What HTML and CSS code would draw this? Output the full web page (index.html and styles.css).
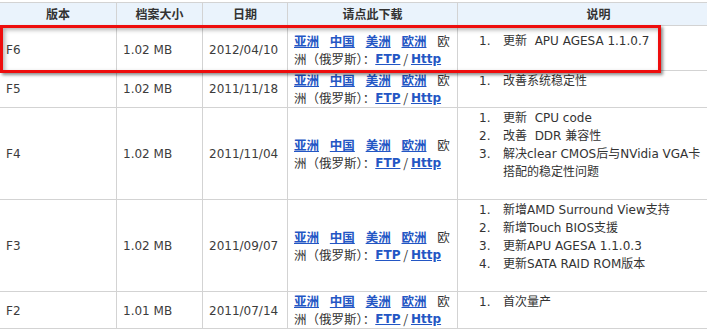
FILE: index.html
```html
<!DOCTYPE html>
<html lang="zh-CN">
<head>
<meta charset="utf-8">
<title>BIOS 下载</title>
<link rel="stylesheet" href="styles.css">
</head>
<body>
<div class="wrap">
<table class="bios">
  <colgroup>
    <col class="c-ver"><col class="c-size"><col class="c-date"><col class="c-dl"><col class="c-desc">
  </colgroup>
  <thead>
    <tr class="head">
      <th>版本</th><th>档案大小</th><th>日期</th><th>请点此下载</th><th>说明</th>
    </tr>
  </thead>
  <tbody>
    <tr class="r6">
      <td>F6</td><td>1.02 MB</td><td>2012/04/10</td>
      <td class="dl"><a href="#">亚洲</a> <a href="#">中国</a> <a href="#">美洲</a> <a href="#">欧洲</a> 欧洲（俄罗斯）：<a href="#" class="lat">FTP</a> / <a href="#" class="lat">Http</a></td>
      <td class="desc first"><ol><li>更新&nbsp; APU AGESA 1.1.0.7</li></ol></td>
    </tr>
    <tr class="r5">
      <td>F5</td><td>1.02 MB</td><td>2011/11/18</td>
      <td class="dl"><a href="#">亚洲</a> <a href="#">中国</a> <a href="#">美洲</a> <a href="#">欧洲</a> 欧洲（俄罗斯）：<a href="#" class="lat">FTP</a> / <a href="#" class="lat">Http</a></td>
      <td class="desc"><ol><li>改善系统稳定性</li></ol></td>
    </tr>
    <tr class="r4">
      <td>F4</td><td>1.02 MB</td><td>2011/11/04</td>
      <td class="dl"><a href="#">亚洲</a> <a href="#">中国</a> <a href="#">美洲</a> <a href="#">欧洲</a> 欧洲（俄罗斯）：<a href="#" class="lat">FTP</a> / <a href="#" class="lat">Http</a></td>
      <td class="desc"><ol><li>更新&nbsp; CPU code</li><li>改善&nbsp; DDR 兼容性</li><li>解决clear CMOS后与NVidia VGA卡搭配的稳定性问题</li></ol></td>
    </tr>
    <tr class="r3">
      <td>F3</td><td>1.02 MB</td><td>2011/09/07</td>
      <td class="dl"><a href="#">亚洲</a> <a href="#">中国</a> <a href="#">美洲</a> <a href="#">欧洲</a> 欧洲（俄罗斯）：<a href="#" class="lat">FTP</a> / <a href="#" class="lat">Http</a></td>
      <td class="desc"><ol><li>新增AMD Surround View支持</li><li>新增Touch BIOS支援</li><li>更新APU AGESA 1.1.0.3</li><li>更新SATA RAID ROM版本</li></ol></td>
    </tr>
    <tr class="r2">
      <td>F2</td><td>1.01 MB</td><td>2011/07/14</td>
      <td class="dl"><a href="#">亚洲</a> <a href="#">中国</a> <a href="#">美洲</a> <a href="#">欧洲</a> 欧洲（俄罗斯）：<a href="#" class="lat">FTP</a> / <a href="#" class="lat">Http</a></td>
      <td class="desc"><ol><li>首次量产</li></ol></td>
    </tr>
  </tbody>
</table>
<div class="highlight"></div>
</div>
</body>
</html>
```

FILE: styles.css
```css
html, body {
  margin: 0;
  padding: 0;
  background: #fff;
  overflow: hidden;
}
.wrap {
  position: relative;
  padding-top: 2px;
  width: 707px;
  height: 329px;
  overflow: hidden;
}
.bios {
  border-collapse: collapse;
  table-layout: fixed;
  width: 740px;
  margin-left: -1px;
  font-family: "DejaVu Sans", "Noto Sans CJK SC", sans-serif;
  font-size: 12px;
  color: #3c3c3c;
}
.c-ver { width: 117px; }
.c-size { width: 86px; }
.c-date { width: 85px; }
.c-dl { width: 170px; }
.c-desc { width: 282px; }
.bios th, .bios td {
  border: 1px solid #d3d3d3;
}
.bios th {
  background: #eaf3fc;
  font-family: "Noto Sans CJK SC", sans-serif;
  font-weight: bold;
  font-size: 12px;
  color: #333;
  text-align: center;
  height: 22px;
  padding: 0;
  line-height: 14px;
}
.bios td {
  padding: 0 6px;
  vertical-align: middle;
  line-height: 18px;
}
.bios td:first-child { padding-left: 6px; }
.r6 td { height: 44px; }
.r5 td { height: 36px; }
.r4 td { height: 91px; }
.r3 td { height: 91px; }
.r2 td { height: 36px; }
.r6 td:not(.desc) { padding-top: 4px; height: 40px; }
.r2 td:not(.dl):not(.desc) { padding-top: 2px; height: 34px; }
.bios td.dl {
  font-family: "Noto Sans CJK SC", sans-serif;
  font-size: 12.5px;
  color: #333;
  line-height: 18px;
  padding-right: 5px;
}
.dl a {
  color: #2356c4;
  font-weight: bold;
  text-decoration: underline;
  margin-right: 8px;
  vertical-align: top;
}
.dl a.lat {
  font-family: "DejaVu Sans", sans-serif;
  font-size: 12px;
  margin-right: 0;
}
.bios td.desc {
  vertical-align: top;
  padding: 0 34px 0 0;
  color: #333;
}
.desc ol {
  list-style: none;
  margin: 1px 0 0;
  padding: 0 0 0 45px;
  counter-reset: item;
}
.desc.first ol { margin-top: 6px; }
.desc li {
  counter-increment: item;
  line-height: 18px;
}
.desc li::before {
  content: counter(item) ".";
  display: inline-block;
  width: 24px;
  margin-left: -24px;
}
.highlight {
  position: absolute;
  left: 0;
  top: 25px;
  width: 655px;
  height: 42px;
  border: 3px solid #ee0d0d;
  box-shadow: 2px 2px 3px rgba(0, 0, 0, 0.45), inset 2px 2px 4px rgba(0, 0, 0, 0.3);
  pointer-events: none;
}
```
